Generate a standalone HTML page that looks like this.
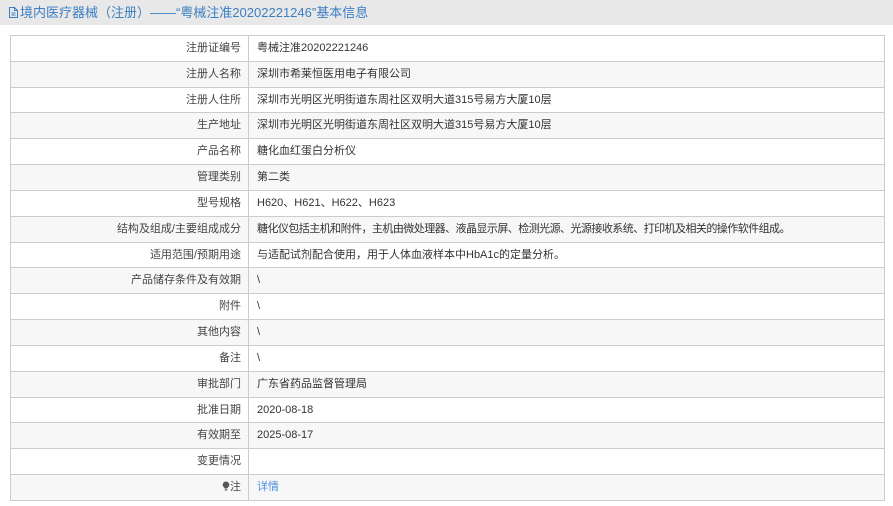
<!DOCTYPE html>
<html><head><meta charset="utf-8"><style>
*{margin:0;padding:0;box-sizing:border-box}
body{width:893px;height:506px;background:#fff;font-family:"Liberation Sans","Noto Sans CJK SC",sans-serif;font-size:11px;color:#333;position:relative;overflow:hidden}
.hd{position:absolute;left:0;top:0;width:893px;height:25px;background:#e8e8e8;color:#3b7fc4;font-size:13px;line-height:25px;padding-left:8px}
.tb{position:absolute;left:10px;top:35px;width:875px;border:1px solid #ccc;border-bottom:none}
.r{height:25.83px;border-bottom:1px solid #ccc;display:flex;line-height:24.8px}
.r:nth-child(even){background:#f7f7f7}
.l{width:238px;border-right:1px solid #ccc;text-align:right;padding-right:7px;color:#444}
.v{padding-left:8px;color:#333}
a{color:#4a8fe0;text-decoration:none}
</style></head><body>
<div class="hd"><svg width="11" height="13" viewBox="0 0 11 13" style="vertical-align:-2px;margin-right:1px"><path d="M1.5 1.5h5l3 3v7h-8z M6.5 1.5v3h3 M3.5 7h4 M3.5 9h4" fill="none" stroke="#3b7fc4" stroke-width="1"/></svg>境内医疗器械（注册）——“粤械注准20202221246”基本信息</div>
<div class="tb">
<div class="r"><div class="l">注册证编号</div><div class="v">粤械注准20202221246</div></div>
<div class="r"><div class="l">注册人名称</div><div class="v">深圳市希莱恒医用电子有限公司</div></div>
<div class="r"><div class="l">注册人住所</div><div class="v">深圳市光明区光明街道东周社区双明大道315号易方大厦10层</div></div>
<div class="r"><div class="l">生产地址</div><div class="v">深圳市光明区光明街道东周社区双明大道315号易方大厦10层</div></div>
<div class="r"><div class="l">产品名称</div><div class="v">糖化血红蛋白分析仪</div></div>
<div class="r"><div class="l">管理类别</div><div class="v">第二类</div></div>
<div class="r"><div class="l">型号规格</div><div class="v">H620、H621、H622、H623</div></div>
<div class="r"><div class="l">结构及组成/主要组成成分</div><div class="v" style="letter-spacing:-0.55px">糖化仪包括主机和附件，主机由微处理器、液晶显示屏、检测光源、光源接收系统、打印机及相关的操作软件组成。</div></div>
<div class="r"><div class="l">适用范围/预期用途</div><div class="v">与适配试剂配合使用，用于人体血液样本中HbA1c的定量分析。</div></div>
<div class="r"><div class="l">产品储存条件及有效期</div><div class="v">\</div></div>
<div class="r"><div class="l">附件</div><div class="v">\</div></div>
<div class="r"><div class="l">其他内容</div><div class="v">\</div></div>
<div class="r"><div class="l">备注</div><div class="v">\</div></div>
<div class="r"><div class="l">审批部门</div><div class="v">广东省药品监督管理局</div></div>
<div class="r"><div class="l">批准日期</div><div class="v">2020-08-18</div></div>
<div class="r"><div class="l">有效期至</div><div class="v">2025-08-17</div></div>
<div class="r"><div class="l">变更情况</div><div class="v"></div></div>
<div class="r"><div class="l"><svg width="8" height="10" viewBox="0 0 8 10" style="vertical-align:-1px"><path d="M4 0.5a3.3 3.3 0 0 1 3.3 3.3c0 1.8-1.5 2.6-2 3.7h-2.6c-.5-1.1-2-1.9-2-3.7A3.3 3.3 0 0 1 4 0.5z M2.8 8.3h2.4v1.2h-2.4z" fill="#555"/></svg>注</div><div class="v"><a>详情</a></div></div>
</div>
</body></html>
